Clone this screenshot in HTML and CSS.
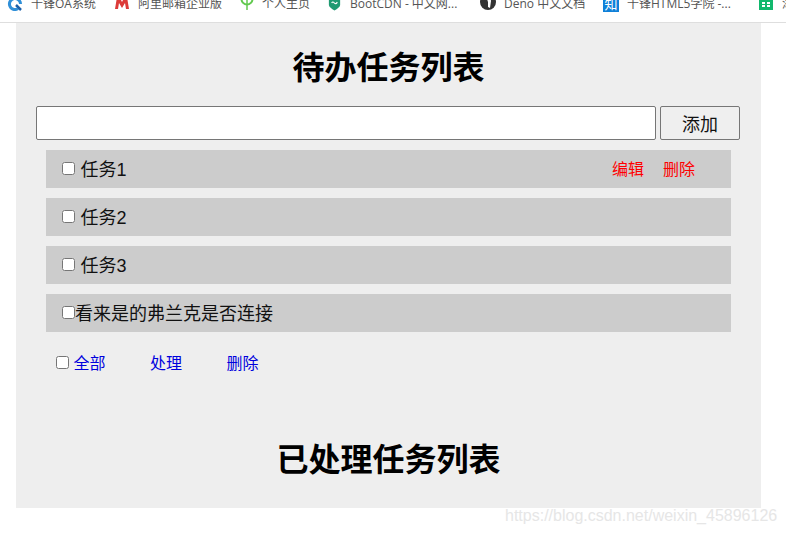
FILE: index.html
```html
<!DOCTYPE html>
<html lang="zh">
<head>
<meta charset="utf-8">
<title>待办任务列表</title>
<link rel="stylesheet" href="styles.css">
</head>
<body>
<nav class="bookmarks">
  <a class="bookmark"><svg class="icon" viewBox="0 0 16 16"><path d="M8 1a7 7 0 1 0 4 12.700l-2-2.200A4 4 0 1 1 12 8h3a7 7 0 0 0-7-7z" fill="#2f8fd8"/><path d="M9 9l5 5" stroke="#1c5fa8" stroke-width="2.500"/></svg><span>千锋OA系统</span></a>
  <a class="bookmark"><svg class="icon" viewBox="0 0 16 16"><path d="M1 13 3 1h2.500L8 6l2.500-5H13l2 12h-3l-1-6-3 5-3-5-1 6z" fill="#dc3a38"/></svg><span>阿里邮箱企业版</span></a>
  <a class="bookmark"><svg class="icon icon-tree" viewBox="0 0 14 16"><circle cx="7" cy="3" r="5.500" fill="none" stroke="#62c94f" stroke-width="2"/><path d="M7 3v11" stroke="#62c94f" stroke-width="1.500"/></svg><span>个人主页</span></a>
  <a class="bookmark"><svg class="icon icon-shield" viewBox="0 0 16 16"><path d="M2 0h12v9c0 2-3 4-6 6-3-2-6-4-6-6z" fill="#1f9a72"/><path d="M5 7c1-2 2-1 3 0s2 1 3-1" fill="none" stroke="#fff" stroke-width="1.200"/></svg><span>BootCDN - 中文网...</span></a>
  <a class="bookmark"><svg class="icon" viewBox="0 0 16 16"><circle cx="8" cy="6" r="8" fill="#333"/><path d="M7 3c2-1 4 0 4 2l-1 7-2-1V6z" fill="#fff"/></svg><span>Deno 中文文档</span></a>
  <a class="bookmark"><span class="zhi">知</span><span>千锋HTML5学院 -...</span></a>
  <a class="bookmark"><svg class="icon" viewBox="0 0 16 16"><rect x="1" y="-2" width="14" height="16" fill="#11b86d"/><path d="M4 6h3v2H4zm5 0h3v2H9zm-5 3h3v2H4zm5 0h3v2H9z" fill="#fff"/></svg><span>添</span></a>
</nav>
<main class="panel">
  <h1 class="title">待办任务列表</h1>
  <form class="add-form">
    <input class="add-input" type="text">
    <button class="add-button" type="button">添加</button>
  </form>
  <ul class="tasks">
    <li class="task">
      <label class="task-label"><input class="check" type="checkbox"><span class="task-text">任务1</span></label>
      <span class="actions"><a class="action">编辑</a><a class="action">删除</a></span>
    </li>
    <li class="task"><label class="task-label"><input class="check" type="checkbox"><span class="task-text">任务2</span></label></li>
    <li class="task"><label class="task-label"><input class="check" type="checkbox"><span class="task-text">任务3</span></label></li>
    <li class="task"><label class="task-label"><input class="check" type="checkbox"><span>看来是的弗兰克是否连接</span></label></li>
  </ul>
  <div class="bulk">
    <label class="bulk-all"><input class="check" type="checkbox"><a class="bulk-link">全部</a></label>
    <a class="bulk-link">处理</a>
    <a class="bulk-link">删除</a>
  </div>
  <h1 class="title done-title">已处理任务列表</h1>
</main>
<div class="watermark">https://blog.csdn.net/weixin_45896126</div>
</body>
</html>
```
FILE: styles.css
```css
* { box-sizing: border-box; }
html, body { margin: 0; padding: 0; height: 534px; overflow: hidden; }
body {
  background: #fff;
  color: #111;
  font-family: "Liberation Sans", "Noto Sans CJK SC", sans-serif;
  position: relative;
}
.bookmarks {
  height: 23px;
  border-bottom: 1px solid #dedede;
  padding-left: 7px;
  display: grid;
  grid-template-columns: 107px 126px 87px 153px 123px 155px 60px;
  overflow: hidden;
  background: #fff;
}
.bookmark {
  display: flex;
  align-items: center;
  gap: 8px;
  height: 16px;
  margin-top: -4px;
  font-family: "Open Sans", "Noto Sans CJK SC", sans-serif;
  font-size: 12px;
  line-height: 16px;
  color: #555;
  white-space: nowrap;
}
.icon { width: 16px; height: 16px; flex: none; }
.icon-tree { width: 14px; }
.icon-shield { width: 15px; }
.zhi {
  width: 16px;
  height: 16px;
  flex: none;
  background: #0f80d8;
  color: #fff;
  font-size: 13px;
  line-height: 16px;
  text-align: center;
}
.panel {
  width: 745px;
  height: 485px;
  margin-left: 16px;
  background: #eee;
  padding: 21px 20px 0;
}
.title {
  margin: 0;
  font-size: 32px;
  line-height: 48px;
  font-weight: 700;
  color: #000;
  text-align: center;
}
.add-form {
  display: flex;
  gap: 4px;
  height: 34px;
  margin-top: 14px;
}
.add-input {
  width: 620px;
  height: 34px;
  border: 1px solid #767676;
  border-radius: 2px;
  background: #fff;
  padding: 0 4px;
}
.add-button {
  width: 80px;
  height: 34px;
  border: 1px solid #767676;
  border-radius: 2px;
  background: #efefef;
  color: #111;
  font: inherit;
  font-size: 18px;
}
.tasks {
  list-style: none;
  margin: 10px 0 0 10px;
  padding: 0;
  width: 685px;
  display: flex;
  flex-direction: column;
  gap: 10px;
}
.task {
  height: 38px;
  background: #ccc;
  padding: 0 0 2px 16px;
  display: flex;
  align-items: center;
  justify-content: space-between;
  font-size: 18px;
}
.task-label { display: flex; align-items: center; }
.check { width: 13px; height: 13px; margin: 0; flex: none; }
.task-text { margin-left: 5.500px; }
.actions {
  display: flex;
  gap: 19px;
  padding-right: 36px;
}
.action { color: #f00; font-size: 16px; }
.bulk {
  display: flex;
  align-items: center;
  gap: 44.5px;
  margin: 18px 0 0 20px;
  height: 24px;
  font-size: 16px;
}
.bulk-all { display: flex; align-items: center; gap: 4.500px; }
.bulk-link { color: #00d; }
.done-title { margin-top: 62px; }
.watermark {
  position: absolute;
  left: 505px;
  top: 506px;
  font-size: 16px;
  line-height: 20px;
  color: #e6e6e6;
  white-space: nowrap;
}
```
